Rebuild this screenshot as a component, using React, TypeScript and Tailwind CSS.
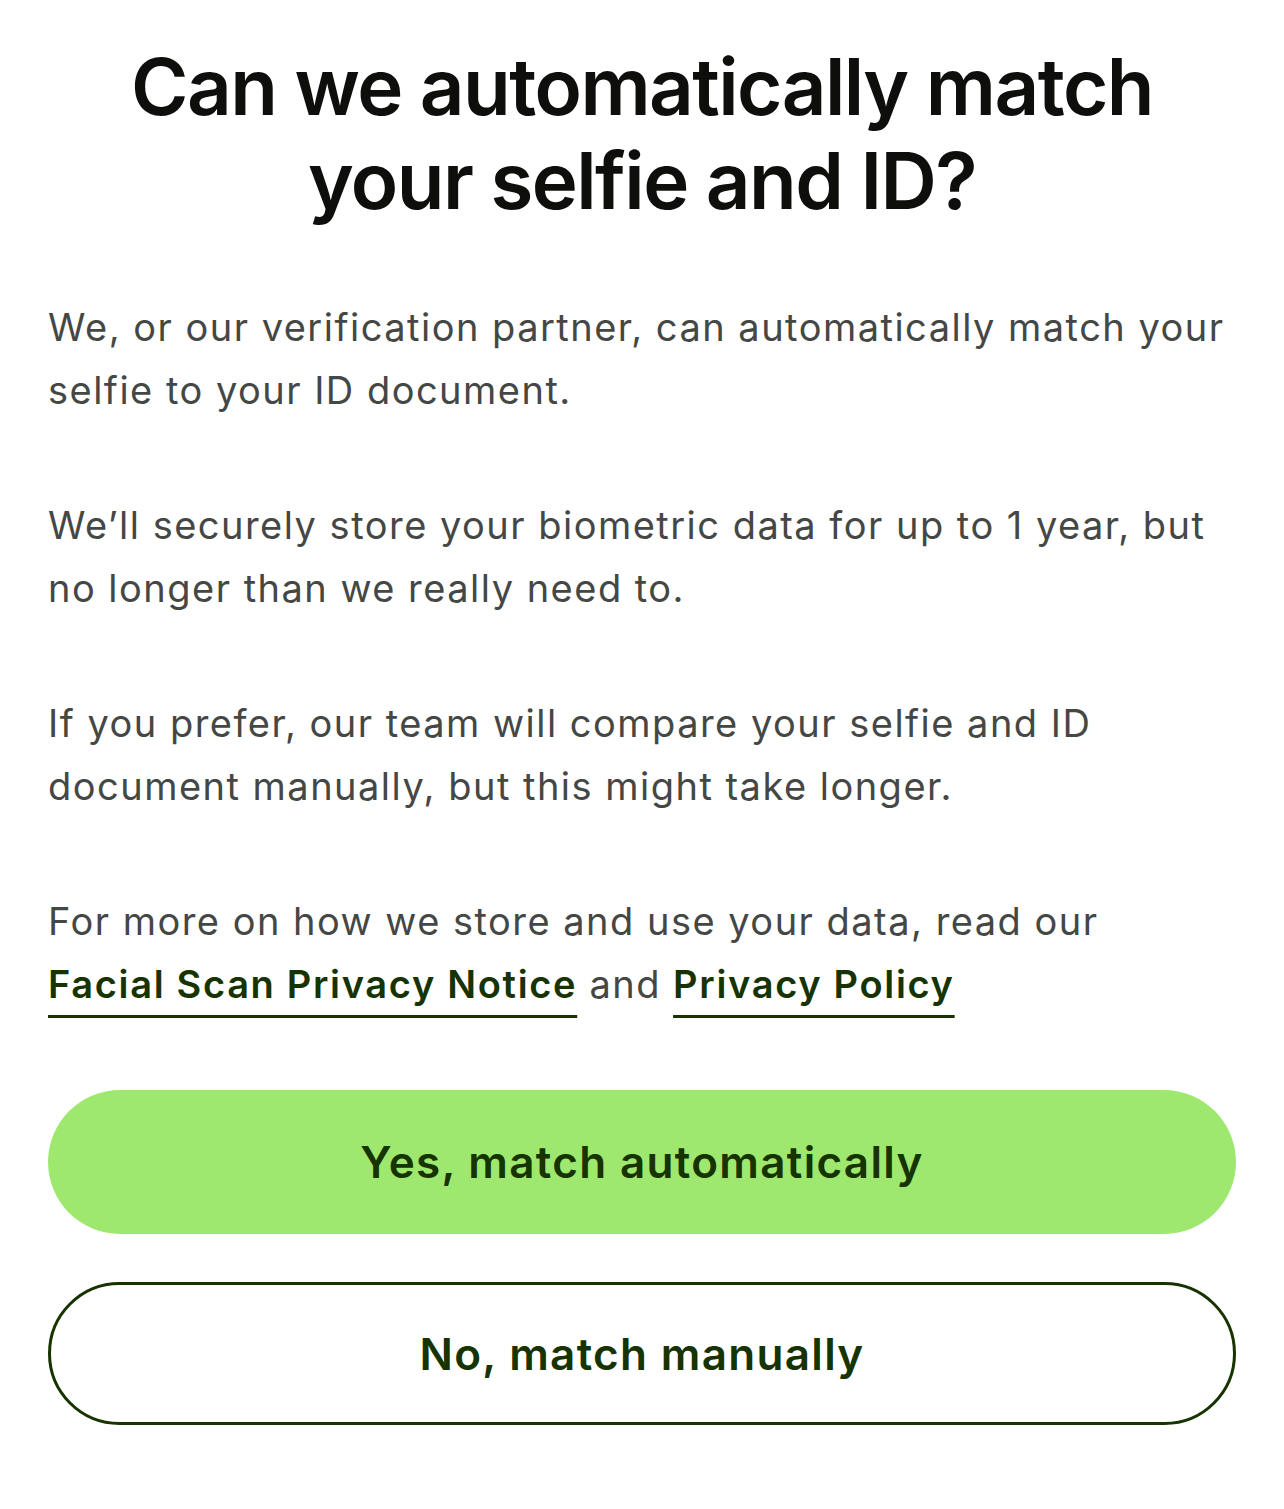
export default function App() {
  return (
    <div className="min-h-[1509px] bg-white px-12 pt-10 font-['Inter',sans-serif]">
      <h1 className="text-center text-[78px] font-semibold leading-[94px] tracking-[-0.02em] text-[#0e0f0c]">
        Can we automatically match
        <br />
        your selfie and ID?
      </h1>

      <div className="mt-[68px] flex flex-col gap-[72px] text-[38px] leading-[63px] tracking-[0.039em] text-[#454745]">
        <p>
          We, or our verification partner, can automatically match your selfie to your ID document.
        </p>
        <p>We’ll securely store your biometric data for up to 1 year, but no longer than we really need to.</p>
        <p>If you prefer, our team will compare your selfie and ID document manually, but this might take longer.</p>
        <p>
          For more on how we store and use your data, read our
          <br />
          <a href="#" className="font-semibold tracking-[0.044em] text-[#163300] underline decoration-[3px] underline-offset-[17px]">
            Facial Scan Privacy Notice
          </a>{' '}
          and{' '}
          <a href="#" className="font-semibold tracking-[0.044em] text-[#163300] underline decoration-[3px] underline-offset-[17px]">
            Privacy Policy
          </a>
        </p>
      </div>

      <div className="mt-[74px] flex flex-col gap-12">
        <button className="h-[144px] w-full rounded-full bg-[#9fe870] text-[44px] font-semibold tracking-[0.03em] text-[#163300]">
          Yes, match automatically
        </button>
        <button className="h-[143px] w-full rounded-full border-[3px] border-[#163300] bg-white text-[44px] font-semibold tracking-[0.03em] text-[#163300]">
          No, match manually
        </button>
      </div>
    </div>
  );
}
